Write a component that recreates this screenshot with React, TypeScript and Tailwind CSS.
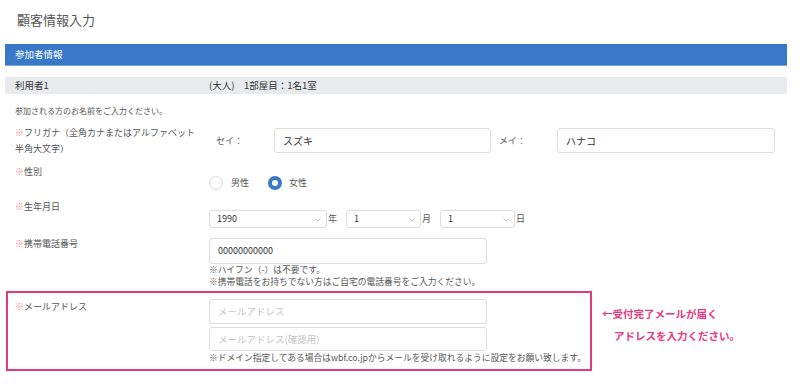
import type { ReactNode } from "react"

const font = { fontFamily: '"Noto Sans CJK JP", "Noto Sans", sans-serif' }

function Req({ children }: { children: ReactNode }) {
  return (
    <span>
      <span className="text-[#f08a8a]">※</span>
      {children}
    </span>
  )
}

function Chevron() {
  return (
    <svg width="6" height="4" viewBox="0 0 6 4" className="absolute right-[5px] top-[7px]">
      <path d="M0.5 0.5 L3 3 L5.5 0.5" fill="none" stroke="#aaa" strokeWidth="0.8" />
    </svg>
  )
}

function Select({ value, width }: { value: string; width: string }) {
  return (
    <div className={`relative h-[18px] rounded-[3px] border border-[#dcdcdc] bg-white pl-[7px] text-[9px] leading-[16px] text-[#333] ${width}`}>
      {value}
      <Chevron />
    </div>
  )
}

function Input({ value, placeholder, className }: { value?: string; placeholder?: string; className: string }) {
  return (
    <div className={`rounded-[3px] border border-[#dcdcdc] bg-white pl-[8px] ${className}`}>
      {value ? <span className="text-[#333]">{value}</span> : <span className="text-[#c4c4c4]">{placeholder}</span>}
    </div>
  )
}

export default function App() {
  return (
    <div className="h-[389px] w-[800px] overflow-hidden bg-white text-[#555]" style={font}>
      <div className="pl-[17px] pt-[10px] text-[13px] leading-[20px] text-[#555]">顧客情報入力</div>

      <div className="ml-[5px] mt-[14px] w-[782px]">
        <div className="h-[22px] border-b border-[#7fa7dd] bg-[#3a78c8] pl-[10px] text-[9.5px] leading-[21px] text-white">
          参加者情報
        </div>

        <div className="mt-[11px] flex h-[17px] bg-[#e8ebee] pl-[10px] text-[9.5px] leading-[17px] text-[#333]">
          <div className="w-[194px]">利用者1</div>
          <div>(大人)　1部屋目：1名1室</div>
        </div>

        <div className="mt-[11px] h-[12px] pl-[10px] text-[8px] leading-[12px]">参加される方のお名前をご入力ください。</div>

        {/* furigana */}
        <div className="mt-[8px] flex h-[39px] pl-[10px] text-[9px] leading-[16px]">
          <div className="w-[194px] whitespace-nowrap">
            <Req>フリガナ（全角カナまたはアルファベット</Req>
            <br />
            半角大文字）
          </div>
          <div className="flex items-center pt-[3px] self-start">
            <div className="w-[65px] pl-[7px] text-[#555]">セイ：</div>
            <Input value="スズキ" className="h-[25px] w-[217px] text-[10px] leading-[23px]" />
            <div className="ml-[8px] w-[58px]">メイ：</div>
            <Input value="ハナコ" className="h-[25px] w-[218px] text-[10px] leading-[23px]" />
          </div>
        </div>

        {/* gender */}
        <div className="flex h-[35px] pl-[10px] text-[9px] leading-[16px]">
          <div className="w-[194px]">
            <Req>性別</Req>
          </div>
          <div className="flex items-center pt-[12px] self-start">
            <span className="h-[14px] w-[14px] rounded-full border border-[#d6d6d6] bg-white" />
            <span className="ml-[8px] w-[37px] leading-[14px]">男性</span>
            <span className="h-[14px] w-[14px] rounded-full border-[4px] border-[#3a78c8] bg-white" />
            <span className="ml-[7px] leading-[14px]">女性</span>
          </div>
        </div>

        {/* birthday */}
        <div className="flex h-[37px] pl-[10px] text-[9px] leading-[16px]">
          <div className="w-[194px]">
            <Req>生年月日</Req>
          </div>
          <div className="flex items-center self-start pt-[11px] leading-[18px]">
            <Select value="1990" width="w-[118px]" />
            <span className="ml-[1px] w-[18px]">年</span>
            <Select value="1" width="w-[75px]" />
            <span className="ml-[1px] w-[18px]">月</span>
            <Select value="1" width="w-[75px]" />
            <span className="ml-[1px]">日</span>
          </div>
        </div>

        {/* phone */}
        <div className="flex h-[53px] pl-[10px] text-[9px] leading-[16px]">
          <div className="w-[194px]">
            <Req>携帯電話番号</Req>
          </div>
          <div className="self-start pt-[2px]">
            <Input value="00000000000" className="h-[26px] w-[278px] text-[9px] leading-[24px]" />
            <div className="text-[8.75px] leading-[12px]">※ハイフン（-）は不要です。</div>
            <div className="whitespace-nowrap text-[8.75px] leading-[12px]">※携帯電話をお持ちでない方はご自宅の電話番号をご入力ください。</div>
          </div>
        </div>

        {/* email */}
        <div className="mt-[2px] flex items-start">
          <div className="ml-[1px] flex h-[80px] w-[586px] border-2 border-[#e5397f] pl-[7px] pt-[6px] text-[9px] leading-[16px]">
            <div className="w-[194px]">
              <Req>メールアドレス</Req>
            </div>
            <div>
              <Input placeholder="メールアドレス" className="h-[25px] w-[278px] text-[9.5px] leading-[23px]" />
              <Input placeholder="メールアドレス(確認用)" className="mt-[3px] h-[24px] w-[278px] text-[9.5px] leading-[22px]" />
              <div className="whitespace-nowrap text-[8.75px] leading-[13px]">※ドメイン指定してある場合はwbf.co.jpからメールを受け取れるように設定をお願い致します。</div>
            </div>
          </div>
          <div className="ml-[10px] mt-[12px] text-[10.5px] font-bold leading-[22px] text-[#e5397f]">
            <div>←受付完了メールが届く</div>
            <div className="pl-[12px]">アドレスを入力ください。</div>
          </div>
        </div>
      </div>
    </div>
  )
}
